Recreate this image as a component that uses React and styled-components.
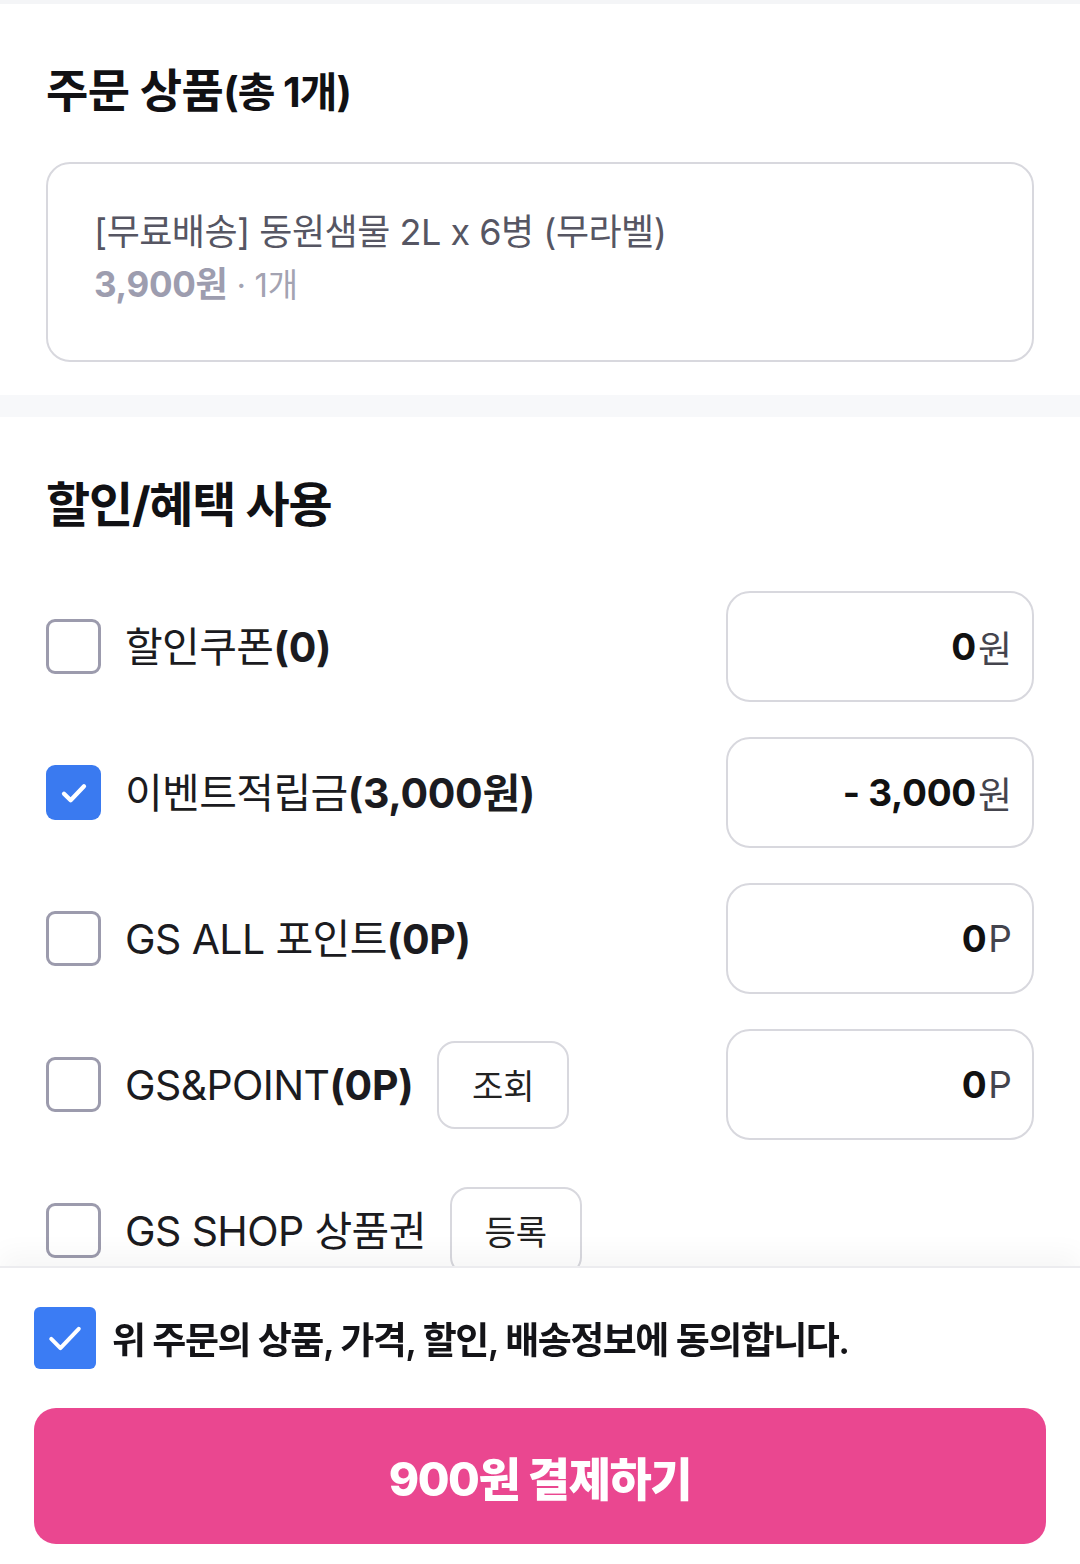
import React from 'react'
import styled, { createGlobalStyle } from 'styled-components'

const GlobalStyle = createGlobalStyle`
  * { box-sizing: border-box; }
  body {
    margin: 0;
    background: #fff;
    font-family: Inter, "Noto Sans CJK KR", sans-serif;
    color: #1b1b20;
  }
`

const rows = [
  { label: '할인쿠폰', count: '(0)', checked: false, value: '0', unit: '원' },
  { label: '이벤트적립금', count: '(3,000원)', checked: true, value: '- 3,000', unit: '원' },
  { label: 'GS ALL 포인트', count: '(0P)', checked: false, value: '0', unit: 'P' },
  { label: 'GS&POINT', count: '(0P)', checked: false, value: '0', unit: 'P', button: '조회' },
  { label: 'GS SHOP 상품권', count: '', checked: false, button: '등록' },
]

const Check = ({ size = 32, stroke = 3.2 }) => (
  <svg width={size} height={size} viewBox='0 0 24 24' fill='none'>
    <path d='M4.5 12.5l5 5L19.5 7' stroke='#fff' strokeWidth={stroke} strokeLinecap='round' strokeLinejoin='round' />
  </svg>
)

const App = () => {
  return (
    <>
      <GlobalStyle />
      <Page>
        <TopStrip />
        <Section>
          <Title>
            주문 상품<TitleSub>(총 1개)</TitleSub>
          </Title>
          <ProductCard>
            <ProductName>[무료배송] 동원샘물 2L x 6병 (무라벨)</ProductName>
            <ProductMeta>
              <Price>3,900원</Price> · 1개
            </ProductMeta>
          </ProductCard>
        </Section>
        <Divider />
        <Section>
          <BigTitle>할인/혜택 사용</BigTitle>
          <RowList>
            {rows.map((r) => (
              <Row key={r.label}>
                <LeftGroup>
                  <Box checked={r.checked}>{r.checked && <Check />}</Box>
                  <Label>
                    {r.label}
                    <Count>{r.count}</Count>
                  </Label>
                  {r.button && <SmallButton>{r.button}</SmallButton>}
                </LeftGroup>
                {r.value !== undefined && (
                  <ValueBox>
                    <Amount>{r.value}</Amount>
                    <Unit>{r.unit}</Unit>
                  </ValueBox>
                )}
              </Row>
            ))}
          </RowList>
        </Section>
      </Page>
      <Footer>
        <AgreeRow>
          <AgreeBox>
            <Check size={44} stroke={2.2} />
          </AgreeBox>
          <AgreeText>위 주문의 상품, 가격, 할인, 배송정보에 동의합니다.</AgreeText>
        </AgreeRow>
        <PayButton>900원 결제하기</PayButton>
      </Footer>
    </>
  )
}

export default App

const Page = styled.div`
  width: 1080px;
  padding-bottom: 320px;
`
const TopStrip = styled.div`
  height: 4px;
  background: #f4f5f7;
`
const Section = styled.section`
  padding: 0 46px 33px;
`
const Title = styled.h2`
  margin: 0;
  padding: 60px 0 44px;
  font-size: 46px;
  font-weight: 700;
  line-height: 52px;
  letter-spacing: -0.6px;
  color: #111114;
`
const TitleSub = styled.span`
  font-size: 41px;
  letter-spacing: -1px;
`
const ProductCard = styled.div`
  height: 200px;
  border: 2px solid #d8d8de;
  border-radius: 24px;
  padding: 44px 46px 0;
  display: flex;
  flex-direction: column;
  gap: 6px;
`
const ProductName = styled.div`
  font-size: 36px;
  line-height: 48px;
  color: #565663;
  letter-spacing: -0.5px;
`
const ProductMeta = styled.div`
  font-size: 33px;
  line-height: 44px;
  color: #a3a3b2;
  letter-spacing: -0.3px;
`
const Price = styled.span`
  font-weight: 700;
  font-size: 35px;
  color: #9d9daf;
`
const Divider = styled.div`
  height: 22px;
  background: #f7f8fa;
`
const BigTitle = styled.h2`
  margin: 0;
  padding: 58px 0 56px;
  font-size: 48px;
  font-weight: 700;
  line-height: 60px;
  letter-spacing: -1.2px;
  color: #111114;
`
const RowList = styled.div`
  display: flex;
  flex-direction: column;
  gap: 35px;
`
const Row = styled.div`
  display: flex;
  align-items: center;
  justify-content: space-between;
  min-height: 111px;
`
const LeftGroup = styled.div`
  display: flex;
  align-items: center;
`
const Box = styled.div`
  width: 55px;
  height: 55px;
  border-radius: 9px;
  border: ${(p) => (p.checked ? 'none' : '3px solid #9c9bad')};
  background: ${(p) => (p.checked ? '#3a7af0' : '#fff')};
  display: flex;
  align-items: center;
  justify-content: center;
  margin-right: 24px;
  flex-shrink: 0;
`
const Label = styled.span`
  font-size: 41px;
  line-height: 52px;
  color: #1b1b20;
  letter-spacing: -0.6px;
`
const Count = styled.span`
  font-weight: 700;
  letter-spacing: -0.3px;
`
const SmallButton = styled.button`
  margin-left: 24px;
  width: 132px;
  height: 88px;
  border: 2px solid #d8d8de;
  border-radius: 18px;
  background: #fff;
  font-family: Inter, "Noto Sans CJK KR", sans-serif;
  font-size: 34px;
  color: #222;
  padding: 0;
`
const ValueBox = styled.div`
  width: 308px;
  height: 111px;
  border: 2px solid #d8d8de;
  border-radius: 24px;
  display: flex;
  align-items: center;
  justify-content: flex-end;
  padding-right: 20px;
`
const Amount = styled.span`
  font-size: 37px;
  font-weight: 700;
  color: #111;
  letter-spacing: -0.3px;
  margin-right: 2px;
`
const Unit = styled.span`
  font-size: 37px;
  color: #44444d;
`
const Footer = styled.footer`
  position: fixed;
  left: 0;
  right: 0;
  bottom: 0;
  height: 298px;
  background: #fff;
  border-top: 2px solid #ececef;
  box-shadow: 0 -14px 24px rgba(0, 0, 0, 0.035);
  padding: 39px 34px 0;
`
const AgreeRow = styled.div`
  display: flex;
  align-items: center;
  gap: 16px;
`
const AgreeBox = styled.div`
  width: 62px;
  height: 62px;
  border-radius: 6px;
  background: #3b7cf4;
  display: flex;
  align-items: center;
  justify-content: center;
`
const AgreeText = styled.span`
  font-size: 37px;
  font-weight: 600;
  color: #141418;
  letter-spacing: -1.5px;
`
const PayButton = styled.button`
  margin-top: 39px;
  width: 100%;
  height: 136px;
  border: none;
  border-radius: 22px;
  background: #ea4790;
  color: #fff;
  font-family: Inter, "Noto Sans CJK KR", sans-serif;
  font-size: 46px;
  font-weight: 800;
  letter-spacing: -1.5px;
`
